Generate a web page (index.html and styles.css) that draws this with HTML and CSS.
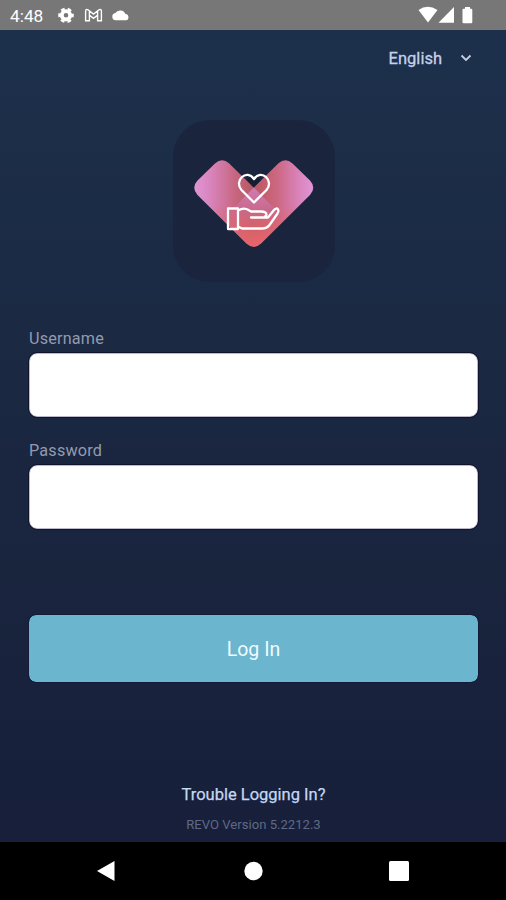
FILE: index.html
```html
<!DOCTYPE html>
<html lang="en">
<head>
<meta charset="utf-8">
<title>Log In</title>
<link rel="stylesheet" href="styles.css">
</head>
<body>
<div class="screen">
  <header class="status">
    <span class="time">4:48</span>
    <svg class="status-left" width="76" height="20" viewBox="56 5 76 20">
      <g fill="none" stroke="#fff">
        <circle cx="66" cy="15.3" r="4.2" stroke-width="3.8"/>
        <circle cx="66" cy="15.3" r="6.6" stroke-width="2.4" stroke-dasharray="3.8 3.11" stroke-dashoffset="1.9"/>
        <path d="M85.6 20.8V11.2Q85.8 8.6 88 9.8L93.5 14L99 9.8Q101.2 8.6 101.4 11.2V20.8H97.6V15.2L93.5 18.3L89.4 15.2V20.8ZM89.4 15V11M97.6 15V11" stroke-width="1.4"/>
      </g>
      <path d="M115.500 20.300A3.700 3.700 0 0 1 115.300 13A5.800 5.800 0 0 1 125.500 14A3.200 3.200 0 0 1 126 20.300Z" fill="#fff"/>
    </svg>
    <svg class="status-right" width="56" height="20" viewBox="418 5 56 20" fill="#fff">
      <path d="M418.500 10Q427.500 3.500 437.500 10L428 22.500Z"/>
      <path d="M454 7V22.700H438.500Z"/>
      <path d="M465 7H470V8.800H471.200Q472.300 8.800 472.300 10V22Q472.300 23.200 471.200 23.200H463.700Q462.500 23.200 462.500 22V10Q462.500 8.800 463.700 8.800H465Z"/>
    </svg>
  </header>
  <main class="content">
    <div class="language">
      <span>English</span>
      <svg width="12" height="8" viewBox="0 0 12 8"><path d="M1.500 1.500L6 6L10.500 1.500" fill="none" stroke="#c5d1e2" stroke-width="1.800"/></svg>
    </div>
    <svg class="logo" width="162" height="162" viewBox="173 120 162 162">
      <defs>
        <linearGradient id="arms" gradientUnits="userSpaceOnUse" x1="195" y1="0" x2="313" y2="0">
          <stop offset="0" stop-color="#df94d4"/><stop offset=".14" stop-color="#d883bb"/><stop offset=".34" stop-color="#c7667f"/><stop offset=".48" stop-color="#b85a68"/><stop offset=".56" stop-color="#c25b69"/><stop offset=".7" stop-color="#cc6883"/><stop offset=".88" stop-color="#da83bb"/><stop offset="1" stop-color="#e095d6"/>
        </linearGradient>
        <linearGradient id="base" gradientUnits="userSpaceOnUse" x1="0" y1="204" x2="0" y2="246">
          <stop offset="0" stop-color="#e2666d" stop-opacity="0"/><stop offset="1" stop-color="#e9656a"/>
        </linearGradient>
        <linearGradient id="overlap" gradientUnits="userSpaceOnUse" x1="0" y1="187" x2="0" y2="232">
          <stop offset="0" stop-color="#d07bb4"/><stop offset=".5" stop-color="#c96a8c"/><stop offset="1" stop-color="#e5666e" stop-opacity="0"/>
        </linearGradient>
        <path id="vee" d="M197.500 180.500L215 163.500Q222 157 229 163.200L253.700 187.500L278.500 163.200Q285.500 157 292.500 163.500L310 180.500Q316.500 187.500 310 195L261 243.500Q253.700 250 246.500 243.500L197.500 195Q191 187.500 197.500 180.500Z"/>
      </defs>
      <rect x="173" y="120" width="162" height="162" rx="37" fill="#1b243d"/>
      <use href="#vee" fill="url(#arms)"/>
      <use href="#vee" fill="url(#base)"/>
      <path d="M253.700 187.500L282 216L254 244L226 216Z" fill="url(#overlap)"/>
      <path d="M247 180L253.700 187.500L261 180L257 177L253.700 181L250 177Z" fill="#171d31"/>
      <g fill="none" stroke="#fff" stroke-width="2.3" stroke-linejoin="round" stroke-linecap="round">
        <path d="M254 202.500L241.500 190C233.500 181 246.500 168 254 179C261.500 168 274.500 181 266.500 190Z"/>
        <path d="M228 208.500H238V229H228ZM238 210.500Q244 207 248.500 210L251 211.500H261Q266.500 211.500 266.500 215L264 217.500H251M264.500 217.500H268L274 210Q276.500 207.300 278 209.500Q279 211 277.500 213.500L269.500 225Q267 228.500 262 228.500H242L238 226.500"/>
      </g>
    </svg>
    <form class="form">
      <label for="user">Username</label>
      <input id="user" type="text">
      <label for="pass">Password</label>
      <input id="pass" type="password">
      <button type="button">Log In</button>
    </form>
    <a class="trouble">Trouble Logging In?</a>
    <div class="version">REVO Version 5.2212.3</div>
  </main>
  <nav class="nav">
    <svg width="20" height="22" viewBox="0 0 20 22"><path d="M1 11L18.500 1V21Z" fill="#fff"/></svg>
    <svg width="20" height="20" viewBox="0 0 20 20"><circle cx="10.500" cy="10" r="9.200" fill="#fff"/></svg>
    <svg width="20" height="20" viewBox="0 0 20 20"><rect width="20" height="20" rx="1.500" fill="#fff"/></svg>
  </nav>
</div>
</body>
</html>
```
FILE: styles.css
```css
* { box-sizing: border-box; }
body { margin: 0; font-family: Roboto, "Liberation Sans", sans-serif; }
svg { display: block; }
.screen { width: 506px; height: 900px; display: flex; flex-direction: column; overflow: hidden; }
.status { height: 30px; padding: 0 32px 0 10px; display: flex; align-items: center; background: #777; color: #fff; }
.time { width: 46px; font-size: 17.3px; line-height: 30px; padding-top: 1px; }
.status-right { margin-left: auto; }
.content { height: 812px; padding: 0 28px 0 29px; display: flex; flex-direction: column; align-items: center; background: linear-gradient(#1d304b, #1a263f 55%, #171f3a); }
.language { align-self: flex-end; height: 56px; padding-right: 6px; display: flex; align-items: center; gap: 18px; font-size: 16.5px; color: #c5d1e8; -webkit-text-stroke: .3px #c5d1e8; }
.logo { margin-top: 34px; flex: none; }
.form { width: 449px; margin-top: 44px; display: flex; flex-direction: column; }
label { height: 27px; line-height: 25px; font-size: 16.2px; letter-spacing: .2px; color: #929bb0; }
input { width: 100%; height: 64px; margin: 0 0 21px; border: 1px solid #bcb9cb; border-radius: 8px; background: #fff; outline: 1px solid #11132f; }
#pass { margin-bottom: 86px; }
button { height: 67px; padding: 2px 0 0; border: 0; border-radius: 7px; background: #6bb5cf; color: #f0fbff; font: 19.5px Roboto, "Liberation Sans", sans-serif; outline: 1px solid #15193a; }
.trouble { margin-top: 102px; font-size: 16.5px; line-height: 22px; color: #c5d7f2; -webkit-text-stroke: .25px #c5d7f2; }
.version { margin-top: 11px; font-size: 13.1px; line-height: 16px; color: #606985; }
.nav { height: 58px; padding: 0 97px 0 96px; display: flex; align-items: center; justify-content: space-between; background: #000; }
```
